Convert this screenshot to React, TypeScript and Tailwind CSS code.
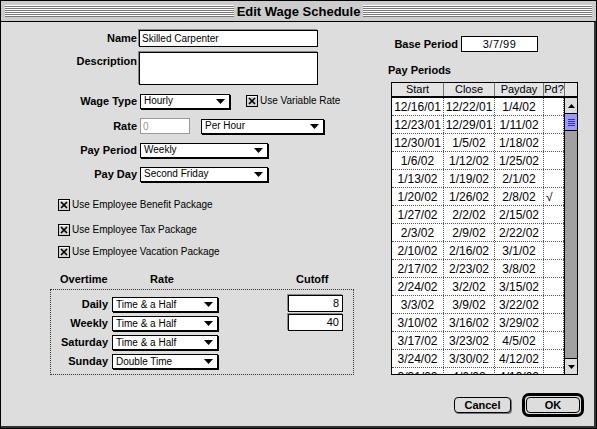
import React from "react";

type Period = { start: string; close: string; payday: string; paid?: boolean };

const periods: Period[] = [
  { start: "12/16/01", close: "12/22/01", payday: "1/4/02" },
  { start: "12/23/01", close: "12/29/01", payday: "1/11/02" },
  { start: "12/30/01", close: "1/5/02", payday: "1/18/02" },
  { start: "1/6/02", close: "1/12/02", payday: "1/25/02" },
  { start: "1/13/02", close: "1/19/02", payday: "2/1/02" },
  { start: "1/20/02", close: "1/26/02", payday: "2/8/02", paid: true },
  { start: "1/27/02", close: "2/2/02", payday: "2/15/02" },
  { start: "2/3/02", close: "2/9/02", payday: "2/22/02" },
  { start: "2/10/02", close: "2/16/02", payday: "3/1/02" },
  { start: "2/17/02", close: "2/23/02", payday: "3/8/02" },
  { start: "2/24/02", close: "3/2/02", payday: "3/15/02" },
  { start: "3/3/02", close: "3/9/02", payday: "3/22/02" },
  { start: "3/10/02", close: "3/16/02", payday: "3/29/02" },
  { start: "3/17/02", close: "3/23/02", payday: "4/5/02" },
  { start: "3/24/02", close: "3/30/02", payday: "4/12/02" },
  { start: "3/31/02", close: "4/6/02", payday: "4/19/02" },
];

function Arrow() {
  return (
    <svg width="9" height="5" viewBox="0 0 9 5" className="ml-auto mr-[4px] shrink-0">
      <polygon points="0,0 9,0 4.5,5" fill="#000" />
    </svg>
  );
}

function Popup({ text, className }: { text: string; className: string }) {
  return (
    <div
      className={`flex h-[15px] items-center border border-black bg-white pl-[3px] shadow-[1px_1px_0_#000] ${className}`}
    >
      <span className="text-[10px] leading-none">{text}</span>
      <Arrow />
    </div>
  );
}

function Check({ label }: { label: string }) {
  return (
    <div className="flex items-center gap-[2px]">
      <svg width="12" height="12" viewBox="0 0 12 12" className="shrink-0">
        <rect x="0.5" y="0.5" width="11" height="11" fill="#d4d4d4" stroke="#000" />
        <path d="M1.5 1.5H10.5" stroke="#fff" />
        <path d="M3 3L9 9M9 3L3 9" stroke="#000" strokeWidth="1.7" />
      </svg>
      <span className="text-[10px] leading-none">{label}</span>
    </div>
  );
}

function Label({ children }: { children: React.ReactNode }) {
  return <div className="w-[136px] text-right text-[11px] font-bold leading-none">{children}</div>;
}

export default function App() {
  return (
    <div className="flex h-[429px] w-[597px] flex-col border border-black bg-[#dddddd] font-['Liberation_Sans',Arial,sans-serif] text-black">
      {/* title bar */}
      <div className="flex h-[21px] items-center border-b border-black bg-[#cccccc] px-[4px]">
        <div className="h-[12px] flex-1 bg-[repeating-linear-gradient(to_bottom,#ffffff_0px,#ffffff_1px,#777777_1px,#777777_2px)]" />
        <div className="px-[3px] text-[13px] font-bold leading-none">Edit Wage Schedule</div>
        <div className="h-[12px] flex-1 bg-[repeating-linear-gradient(to_bottom,#ffffff_0px,#ffffff_1px,#777777_1px,#777777_2px)]" />
      </div>

      <div className="flex flex-1 border-r-2 border-b-2 border-[#333333]">
        {/* left column */}
        <div className="flex w-[384px] flex-col pt-[8px]">
          <div className="flex h-[17px] items-center">
            <Label>Name</Label>
            <div className="ml-[2px] flex h-[17px] w-[179px] items-center border border-black bg-white pl-[2px] text-[10px] shadow-[-1px_-1px_0_#888]">
              Skilled Carpenter
            </div>
          </div>
          <div className="mt-[5px] flex items-start">
            <div className="pt-[4px]">
              <Label>Description</Label>
            </div>
            <div className="ml-[2px] h-[33px] w-[179px] border border-black bg-white shadow-[-1px_-1px_0_#888]" />
          </div>
          <div className="mt-[8px] flex h-[16px] items-center">
            <Label>Wage Type</Label>
            <Popup text="Hourly" className="ml-[3px] w-[90px]" />
            <div className="ml-[16px]">
              <Check label="Use Variable Rate" />
            </div>
          </div>
          <div className="mt-[9px] flex h-[16px] items-center">
            <Label>Rate</Label>
            <div className="ml-[3px] flex h-[16px] w-[50px] items-center border border-[#999] bg-white pl-[2px] text-[10px] text-[#999]">
              0
            </div>
            <Popup text="Per Hour" className="ml-[11px] w-[123px]" />
          </div>
          <div className="mt-[8px] flex h-[16px] items-center">
            <Label>Pay Period</Label>
            <Popup text="Weekly" className="ml-[3px] w-[128px]" />
          </div>
          <div className="mt-[8px] flex h-[16px] items-center">
            <Label>Pay Day</Label>
            <Popup text="Second Friday" className="ml-[3px] w-[128px]" />
          </div>

          <div className="ml-[57px] mt-[17px] flex flex-col">
            <Check label="Use Employee Benefit Package" />
            <div className="mt-[13px]">
              <Check label="Use Employee Tax Package" />
            </div>
            <div className="mt-[10px]">
              <Check label="Use Employee Vacation Package" />
            </div>
          </div>

          <div className="mt-[15px] flex h-[13px] items-center pl-[59px] text-[11px] font-bold leading-none">
            <div className="w-[48px]">Overtime</div>
            <div className="w-[108px] text-center">Rate</div>
            <div className="ml-[80px]">Cutoff</div>
          </div>

          <div className="ml-[49px] mt-[3px] flex h-[86px] w-[304px] flex-col gap-[3px] border border-dotted border-[#333] pt-[7px]">
            {[
              { l: "Daily", v: "Time & a Half", c: "8" },
              { l: "Weekly", v: "Time & a Half", c: "40" },
              { l: "Saturday", v: "Time & a Half" },
              { l: "Sunday", v: "Double Time" },
            ].map((r) => (
              <div key={r.l} className="flex h-[16px] items-start">
                <div className="flex h-[15px] w-[57px] items-center justify-end text-[11px] font-bold leading-none">
                  {r.l}
                </div>
                <Popup text={r.v} className="ml-[4px] w-[106px]" />
                {r.c && (
                  <div className="-mt-[2px] ml-auto mr-[10px] flex h-[17px] w-[55px] items-center justify-end border border-black bg-white pr-[3px] text-[11px] shadow-[-1px_-1px_0_#888]">
                    {r.c}
                  </div>
                )}
              </div>
            ))}
          </div>
        </div>

        {/* right column */}
        <div className="flex flex-1 flex-col pt-[14px]">
          <div className="flex h-[16px] items-center">
            <div className="w-[73px] text-right text-[11px] font-bold leading-none">Base Period</div>
            <div className="ml-[3px] flex h-[16px] w-[77px] items-center justify-center border border-black bg-white text-[11px] tracking-[0.5px]">
              3/7/99
            </div>
          </div>
          <div className="ml-[3px] mt-[12px] flex h-[13px] items-center text-[11px] font-bold leading-none">
            Pay Periods
          </div>

          <div className="ml-[6px] mt-[5px] flex h-[293px] w-[187px] flex-col border border-black bg-white">
            <div className="flex h-[13px] bg-[#e4e4e4] text-[11px] leading-none">
              <div className="flex w-[52px] items-center justify-center border-r border-[#777]">Start</div>
              <div className="flex w-[51px] items-center justify-center border-r border-[#777]">Close</div>
              <div className="flex w-[49px] items-center justify-center border-r border-[#777]">Payday</div>
              <div className="flex w-[21px] items-center justify-center border-r border-[#777]">Pd?</div>
              <div className="flex-1" />
            </div>
            <div className="h-[2px] bg-black" />
            <div className="flex min-h-0 flex-1">
              <div className="flex w-[172px] flex-col overflow-hidden text-[12px] leading-none">
                {periods.map((p) => (
                  <div key={p.start} className="flex h-[18px] shrink-0 border-b border-dotted border-[#555]">
                    <div className="flex w-[52px] items-center justify-center border-r border-dotted border-[#555]">
                      {p.start}
                    </div>
                    <div className="flex w-[51px] items-center justify-center border-r border-dotted border-[#555]">
                      {p.close}
                    </div>
                    <div className="flex w-[49px] items-center justify-center border-r border-dotted border-[#555]">
                      {p.payday}
                    </div>
                    <div className="flex w-[20px] items-center pl-[2px] border-r border-dotted border-[#555]">
                      {p.paid ? "√" : ""}
                    </div>
                  </div>
                ))}
              </div>
              <div className="flex w-[13px] flex-col border-l border-black">
                <div className="flex h-[16px] items-center justify-center border-b border-black bg-[#dddddd]">
                  <svg width="7" height="4" viewBox="0 0 7 4">
                    <polygon points="0,4 7,4 3.5,0" fill="#000" />
                  </svg>
                </div>
                <div className="flex h-[17px] flex-col items-center justify-center gap-[1px] border-b border-black bg-[#9c9cff]">
                  <div className="h-px w-[7px] bg-[#3030a0]" />
                  <div className="h-px w-[7px] bg-[#3030a0]" />
                  <div className="h-px w-[7px] bg-[#3030a0]" />
                  <div className="h-px w-[7px] bg-[#3030a0]" />
                </div>
                <div className="flex-1 bg-[#a0a0a0]" />
                <div className="flex h-[16px] items-center justify-center border-t border-black bg-[#dddddd]">
                  <svg width="7" height="4" viewBox="0 0 7 4">
                    <polygon points="0,0 7,0 3.5,4" fill="#000" />
                  </svg>
                </div>
              </div>
            </div>
          </div>

          <div className="mt-[18px] flex items-center justify-end gap-[11px] pr-[10px]">
            <div className="flex h-[16px] w-[57px] items-center justify-center rounded-[4px] border border-black bg-[#dddddd] text-[11px] font-bold leading-none shadow-[1px_1px_0_#777]">
              Cancel
            </div>
            <div className="rounded-[7px] border-[3px] border-black p-[1px]">
              <div className="flex h-[16px] w-[54px] items-center justify-center rounded-[4px] border border-black bg-[#dddddd] text-[11px] font-bold leading-none">
                OK
              </div>
            </div>
          </div>
        </div>
      </div>
    </div>
  );
}
